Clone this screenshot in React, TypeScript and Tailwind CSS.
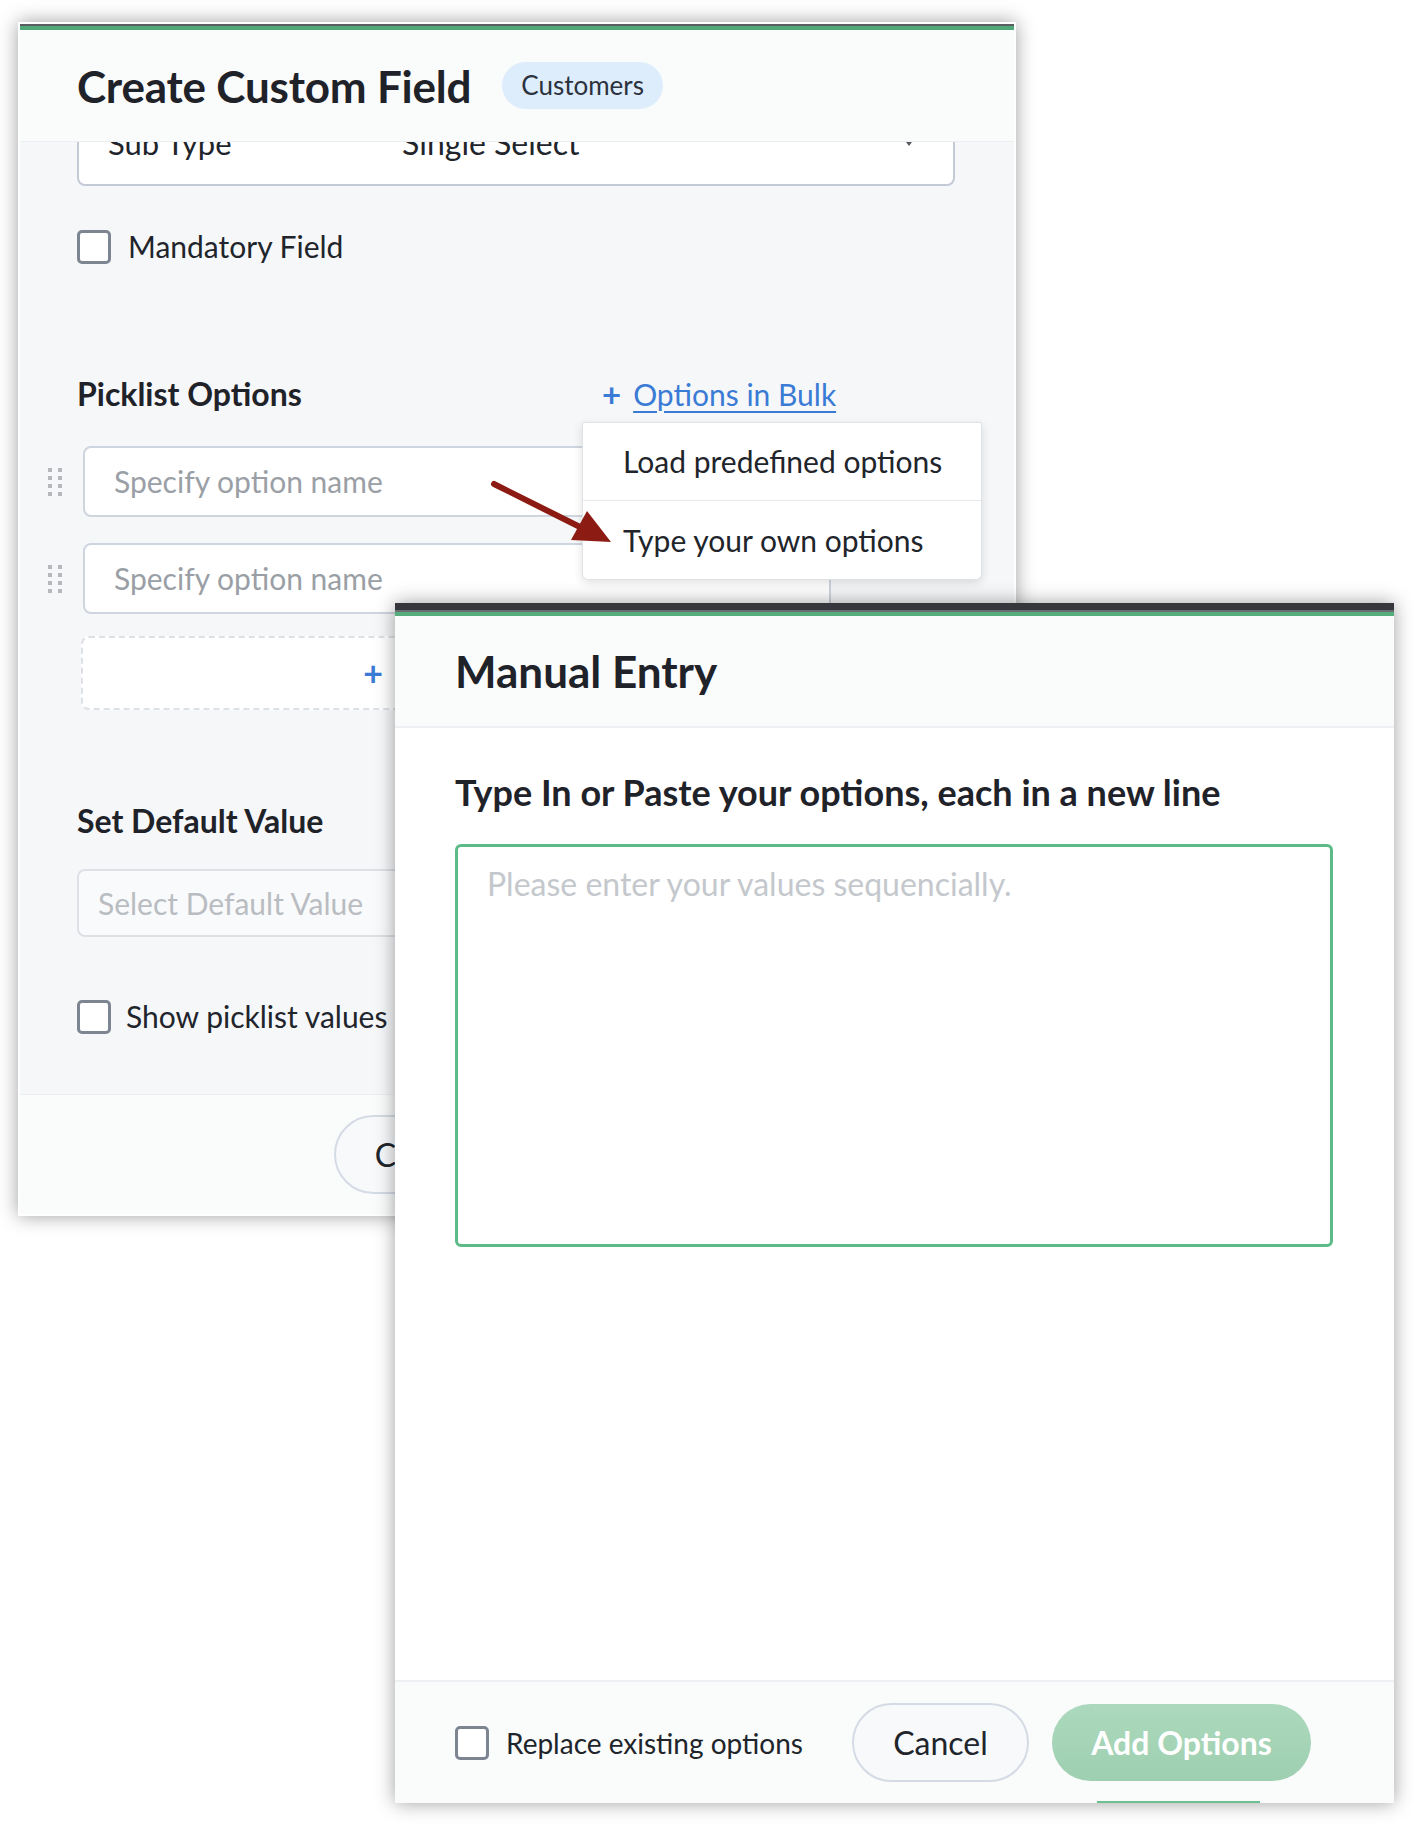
const font = "font-['Lato',sans-serif]";

const Checkbox = () => (
    <div className="w-[34px] h-[34px] shrink-0 rounded-[5px] border-[3px] border-[#7c8591] bg-white" />
);

const DragHandle = () => (
    <div className="grid grid-cols-2 gap-x-[6px] gap-y-[4px] w-[14px]">
        {Array.from({ length: 8 }).map((_, i) => (
            <span key={i} className="w-[4px] h-[4px] bg-[#b5b9be]" />
        ))}
    </div>
);

const OptionRow = ({ first }: { first?: boolean }) => (
    <div className={`flex items-center -ml-[29px] ${first ? "mt-[32px]" : "mt-[26px]"}`}>
        <DragHandle />
        <div className="ml-[21px] w-[748px] h-[71px] rounded-lg border-2 border-[#cfd5de] bg-white flex items-center pl-[29px]">
            <span className="text-[30px] text-[#9a9fa6]">Specify option name</span>
        </div>
    </div>
);

const CustomFieldPanel = () => {
    return (
        <div className="absolute left-[18px] top-[22px] w-[998px] h-[1194px] border-2 border-white bg-white flex flex-col shadow-[0_0_18px_rgba(0,0,0,0.38)]">
            <div className="h-[2px] bg-[#5b5e61]" />
            <div className="h-[4px] bg-[#50a878]" />
            <header className="h-[112px] shrink-0 flex items-center pl-[57px] bg-[#fafbfb] border-b border-[#eceff2] relative z-10">
                <h1 className="text-[44px] font-bold text-[#1f2329] tracking-[-0.2px]">Create Custom Field</h1>
                <span className="ml-[31px] h-[47px] px-[19px] rounded-full bg-[#deedfc] text-[26px] text-[#2b323d] flex items-center">
                    Customers
                </span>
            </header>

            <div className="flex-1 bg-[#f6f7f9] px-[57px] overflow-hidden flex flex-col">
                <div className="-mt-[36px] h-[80px] w-[878px] shrink-0 rounded-lg border-2 border-[#c3cad5] bg-white flex items-center pl-[29px] pb-[6px] relative">
                    <span className="w-[294px] text-[31px] text-[#21252b]">Sub Type</span>
                    <span className="text-[32px] text-[#21252b]">Single Select</span>
                    <span className="absolute right-[38px] top-[30px] w-0 h-0 border-x-[6px] border-x-transparent border-t-[8px] border-t-[#555a60]" />
                </div>

                <label className="mt-[38px] flex items-center gap-[17px]">
                    <Checkbox />
                    <span className="text-[30px] text-[#21252b]">Mandatory Field</span>
                </label>

                <div className="mt-[105px] h-[40px] flex items-center relative">
                    <h2 className="w-[525px] text-[32px] font-bold text-[#1f2329]">Picklist Options</h2>
                    <a className="flex items-center text-[30px] text-[#3a7bd5]">
                        <span className="mr-[12px] text-[33px] leading-none font-bold">+</span>
                        <span className="underline underline-offset-[5px] decoration-2">Options in Bulk</span>
                    </a>
                    <div className="absolute z-20 left-[505px] top-[48px] w-[400px] bg-white border border-[#dfe3e8] rounded-b-md shadow-[0_3px_10px_rgba(0,0,0,0.12)]">
                        <div className="h-[78px] flex items-center pl-[40px] text-[30px] text-[#21252b] border-b border-[#e7eaee]">
                            Load predefined options
                        </div>
                        <div className="h-[78px] flex items-center pl-[40px] text-[30px] text-[#21252b]">
                            Type your own options
                        </div>
                    </div>
                </div>

                <OptionRow first />
                <OptionRow />

                <div className="mt-[22px] ml-[4px] w-[750px] h-[74px] shrink-0 rounded-lg border-2 border-dashed border-[#dde0e5] bg-white flex items-center justify-center gap-[12px] text-[#3a7bd5]">
                    <span className="text-[34px] leading-none font-bold">+</span>
                    <span className="text-[30px]">Add Option</span>
                </div>

                <h2 className="mt-[91px] h-[40px] flex items-center text-[32px] font-bold text-[#1f2329]">Set Default Value</h2>
                <div className="mt-[28px] w-[878px] h-[68px] shrink-0 rounded-lg border-2 border-[#dde1e6] bg-[#f9fafb] flex items-center pl-[19px]">
                    <span className="text-[30px] text-[#b9bdc2]">Select Default Value</span>
                </div>

                <label className="mt-[57px] flex items-center gap-[15px]">
                    <Checkbox />
                    <span className="text-[30px] text-[#21252b]">Show picklist values in alphabetical order</span>
                </label>
            </div>

            <footer className="h-[120px] shrink-0 bg-[#fafbfb] border-t border-[#eceff2] flex items-center justify-center gap-[20px]">
                <button className="w-[177px] h-[79px] rounded-full border-2 border-[#d5dbe5] bg-[#f8f9fb] text-[32px] text-[#21252b]">Cancel</button>
                <button className="w-[170px] h-[79px] rounded-full bg-[#53b07d] text-[32px] font-bold text-white">Save</button>
            </footer>
        </div>
    );
};

const ManualEntryModal = () => {
    return (
        <div className="absolute left-[395px] top-[603px] w-[999px] h-[1200px] bg-white flex flex-col shadow-[0_0_18px_rgba(0,0,0,0.38)] z-30">
            <div className="h-[7px] bg-[#35373c]" />
            <div className="h-[2px] bg-[#6b6e71]" />
            <div className="h-[4px] bg-[#54ad7a]" />
            <header className="h-[112px] shrink-0 flex items-center pl-[60px] bg-[#fafbfb] border-b-2 border-[#eef1f4]">
                <h1 className="text-[44px] font-bold text-[#1f2329]">Manual Entry</h1>
            </header>

            <div className="flex-1 px-[60px] pt-[44px]">
                <h2 className="h-[40px] flex items-center text-[36px] font-bold text-[#1f2329]">
                    Type In or Paste your options, each in a new line
                </h2>
                <textarea
                    className="mt-[32px] w-[878px] h-[403px] block resize-none rounded-[6px] border-[3px] border-[#5cbb87] outline-none pl-[29px] pt-[17px] text-[32px] leading-[40px] placeholder:text-[#c4c8cd] font-['Lato',sans-serif]"
                    placeholder="Please enter your values sequencially."
                />
            </div>

            <footer className="h-[123px] shrink-0 bg-[#fafbfb] border-t-2 border-[#eef1f4] flex items-center pl-[60px] pr-[83px] relative">
                <label className="flex items-center gap-[17px]">
                    <Checkbox />
                    <span className="text-[28px] text-[#21252b]">Replace existing options</span>
                </label>
                <div className="ml-auto flex items-center gap-[23px]">
                    <button className="w-[177px] h-[79px] rounded-full border-2 border-[#d5dbe5] bg-[#f8f9fb] text-[32px] text-[#21252b]">Cancel</button>
                    <button className="w-[259px] h-[77px] rounded-full bg-gradient-to-b from-[#acd9bd] to-[#9ecfb0] text-[32px] font-bold text-white">
                        Add Options
                    </button>
                </div>
                <div className="absolute bottom-0 left-[702px] w-[163px] h-[2px] bg-[#6cc08f]" />
            </footer>
        </div>
    );
};

const Arrow = () => (
    <svg className="absolute left-[480px] top-[470px] z-20" width="140" height="90" viewBox="480 470 140 90">
        <line x1="494" y1="484" x2="584" y2="529" stroke="#8c1c13" strokeWidth="6" strokeLinecap="round" />
        <polygon points="611,542 571,540 587,511" fill="#8c1c13" />
    </svg>
);

export default function App() {
    return (
        <div className={`relative w-[1414px] h-[1824px] bg-white overflow-hidden ${font}`}>
            <CustomFieldPanel />
            <Arrow />
            <ManualEntryModal />
        </div>
    );
}
